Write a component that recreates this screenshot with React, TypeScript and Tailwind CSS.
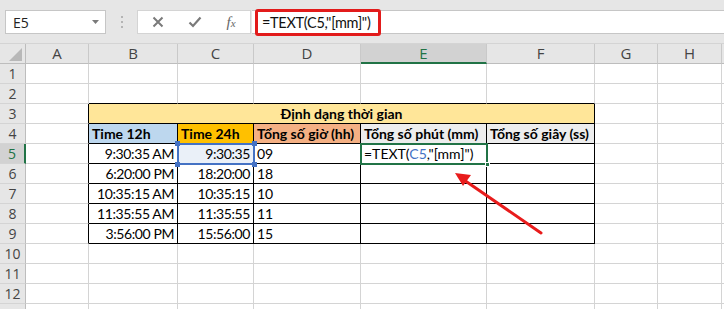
import React from "react";

const cols = [
  { k: "A", w: "w-[63px]" },
  { k: "B", w: "w-[89px]" },
  { k: "C", w: "w-[76px]" },
  { k: "D", w: "w-[107px]" },
  { k: "E", w: "w-[126px]" },
  { k: "F", w: "w-[108px]" },
  { k: "G", w: "w-[63px]" },
  { k: "H", w: "w-[64px]" },
  { k: "I", w: "w-[64px]" },
];

const data: Record<number, string[]> = {
  5: ["9:30:35 AM", "9:30:35", "09"],
  6: ["6:20:00 PM", "18:20:00", "18"],
  7: ["10:35:15 AM", "10:35:15", "10"],
  8: ["11:35:55 AM", "11:35:55", "11"],
  9: ["3:56:00 PM", "15:56:00", "15"],
};

const headerFills = ["bg-[#bdd7ee]", "bg-[#ffc000]", "bg-[#f4b084]", "bg-[#ededed]", "bg-[#ededed]"];
const headerTexts = ["Time 12h", "Time 24h", "Tổng số giờ (hh)", "Tổng số phút (mm)", "Tổng số giây (ss)"];

const inTable = (c: number, r: number) => c >= 1 && c <= 5 && r >= 3 && r <= 9;

function RowHeader({ n }: { n: number }) {
  const active = n === 5;
  return (
    <div
      className={
        "w-[26px] h-[20px] shrink-0 flex items-center justify-center border-b border-b-[#d4d4d4] text-[14px] font-['Segoe_UI','Open_Sans',sans-serif] " +
        (active
          ? "bg-[#d2d2d2] text-[#217346] border-r-2 border-r-[#217346]"
          : "bg-[#e6e6e6] text-[#444] border-r border-r-[#bdbdbd]")
      }
    >
      {n < 13 ? n : ""}
    </div>
  );
}

function Cell({ c, r, children }: { c: number; r: number; children?: React.ReactNode }) {
  const blackR = inTable(c, r) || inTable(c + 1, r);
  const blackB = inTable(c, r) || inTable(c, r + 1);
  let fill = "bg-white";
  let align = "justify-start pl-[3px]";
  let weight = "";
  if (r === 4 && c >= 1 && c <= 5) {
    fill = headerFills[c - 1];
    weight = "font-bold";
  }
  if (r >= 5 && r <= 9 && (c === 1 || c === 2)) align = "justify-end pr-[3px] tracking-[-0.4px]";
  if (r === 5 && c === 2) fill = "bg-[#eaf0f8]";
  return (
    <div
      className={
        cols[c].w +
        " h-[20px] shrink-0 flex items-center overflow-hidden whitespace-nowrap border-r border-b " +
        (blackR ? "border-r-black " : "border-r-[#d4d4d4] ") +
        (blackB ? "border-b-black " : "border-b-[#d4d4d4] ") +
        fill + " " + align + " " + weight
      }
    >
      {children}
    </div>
  );
}

function SheetRow({ r }: { r: number }) {
  if (r === 3) {
    return (
      <div className="flex">
        <RowHeader n={r} />
        <Cell c={0} r={r} />
        <div className="w-[506px] h-[20px] shrink-0 flex items-center justify-center font-bold bg-[#ffe699] border-r border-b border-r-black border-b-black">
          Định dạng thời gian
        </div>
        {[6, 7, 8].map((c) => (
          <Cell key={c} c={c} r={r} />
        ))}
      </div>
    );
  }
  return (
    <div className="flex">
      <RowHeader n={r} />
      {cols.map((_, c) => {
        let content: React.ReactNode = null;
        if (r === 4 && c >= 1 && c <= 5) content = headerTexts[c - 1];
        if (data[r] && c >= 1 && c <= 3) content = data[r][c - 1];
        if (r === 5 && c === 4)
          content = (
            <span>
              =TEXT(<span className="text-[#4472c4]">C5</span>,"[mm]")
            </span>
          );
        return (
          <Cell key={c} c={c} r={r}>
            {content}
          </Cell>
        );
      })}
    </div>
  );
}

function FormulaBar() {
  return (
    <div className="h-[44px] bg-[#e6e6e6] flex items-start pt-[10px] pl-[5px] border-b border-b-[#d4d4d4] font-['Segoe_UI','Open_Sans',sans-serif]">
      <div className="w-[101px] h-[24px] bg-white border border-[#c6c6c6] flex items-center justify-between pl-[7px] pr-[5px] text-[14px] text-[#222]">
        <span>E5</span>
        <svg width="9" height="6" viewBox="0 0 9 6">
          <path d="M1 1 L4.5 5 L8 1 Z" fill="#7a7a7a" />
        </svg>
      </div>
      <div className="w-[31px] h-[24px] flex flex-col items-center justify-center gap-[3px]">
        <div className="w-[2px] h-[2px] bg-[#b4b4b4]" />
        <div className="w-[2px] h-[2px] bg-[#b4b4b4]" />
        <div className="w-[2px] h-[2px] bg-[#b4b4b4]" />
      </div>
      <div className="w-[114px] h-[24px] bg-white border border-[#d4d4d4] flex items-center">
        <div className="w-[40px] flex justify-center">
          <svg width="12" height="12" viewBox="0 0 12 12">
            <path d="M1.5 1.5 L10.5 10.5 M10.5 1.5 L1.5 10.5" stroke="#7a7a7a" strokeWidth="2" />
          </svg>
        </div>
        <div className="w-[34px] flex justify-center">
          <svg width="14" height="12" viewBox="0 0 14 12">
            <path d="M1.5 6.5 L5 10 L12.5 1.5" stroke="#7a7a7a" strokeWidth="2.2" fill="none" />
          </svg>
        </div>
        <div className="w-[38px] flex justify-center italic font-['Liberation_Serif',serif] text-[15px] text-[#666]">
          <span>
            f<span className="text-[11px]">x</span>
          </span>
        </div>
      </div>
      <div className="flex-1 h-[24px] bg-white border-y border-[#c6c6c6] ml-[1px] flex items-center pl-[3px]">
        <div className="h-[27px] mt-[1px] w-[126px] shrink-0 whitespace-nowrap border-[3px] border-[#e21b1b] rounded-[3px] flex items-center pl-[4px] text-[14.5px] tracking-[-0.3px] text-[#111] font-['Lato',sans-serif]">
          =TEXT(C5,"[mm]")
        </div>
      </div>
    </div>
  );
}

export default function App() {
  return (
    <div className="w-[724px] h-[309px] overflow-hidden bg-white text-[14px] text-black font-['Lato','Liberation_Sans',sans-serif]">
      <FormulaBar />
      <div className="relative">
        <div className="flex h-[20px] bg-[#e6e6e6]">
          <div className="w-[26px] h-[20px] shrink-0 border-r border-b border-[#bdbdbd] relative overflow-hidden">
            <svg width="26" height="20" className="absolute inset-0">
              <path d="M22 4 L22 17 L9 17 Z" fill="#b8b8b8" />
            </svg>
          </div>
          {cols.map((col) => (
            <div
              key={col.k}
              className={
                col.w +
                " h-[20px] shrink-0 flex items-center justify-center border-r border-r-[#c9c9c9] text-[15px] font-['Segoe_UI','Open_Sans',sans-serif] " +
                (col.k === "E"
                  ? "bg-[#d2d2d2] text-[#217346] border-b-2 border-b-[#217346]"
                  : "text-[#444] border-b border-b-[#bdbdbd]")
              }
            >
              {col.k === "I" ? "" : col.k}
            </div>
          ))}
        </div>
        {[1, 2, 3, 4, 5, 6, 7, 8, 9, 10, 11, 12, 13].map((r) => (
          <SheetRow key={r} r={r} />
        ))}

        {/* C5 reference highlight */}
        <div className="absolute left-[177px] top-[99px] w-[78px] h-[22px] border-2 border-[#4472c4] pointer-events-none" />
        <div className="absolute left-[175px] top-[97px] w-[5px] h-[5px] bg-[#4472c4]" />
        <div className="absolute left-[252px] top-[97px] w-[5px] h-[5px] bg-[#4472c4]" />
        <div className="absolute left-[175px] top-[118px] w-[5px] h-[5px] bg-[#4472c4]" />
        <div className="absolute left-[252px] top-[118px] w-[5px] h-[5px] bg-[#4472c4]" />

        {/* active cell E5 */}
        <div className="absolute left-[360px] top-[99px] w-[128px] h-[22px] border-2 border-[#217346] pointer-events-none" />
        <div className="absolute left-[485px] top-[118px] w-[5px] h-[5px] bg-[#217346] border border-white" />

        {/* arrow */}
        <svg className="absolute left-0 top-0 pointer-events-none" width="724" height="265">
          <line x1="541" y1="189" x2="464" y2="136" stroke="#e81c1c" strokeWidth="3" strokeLinecap="round" />
          <path d="M455 129 L471 131 L463 142 Z" fill="#e81c1c" />
        </svg>
      </div>
    </div>
  );
}
